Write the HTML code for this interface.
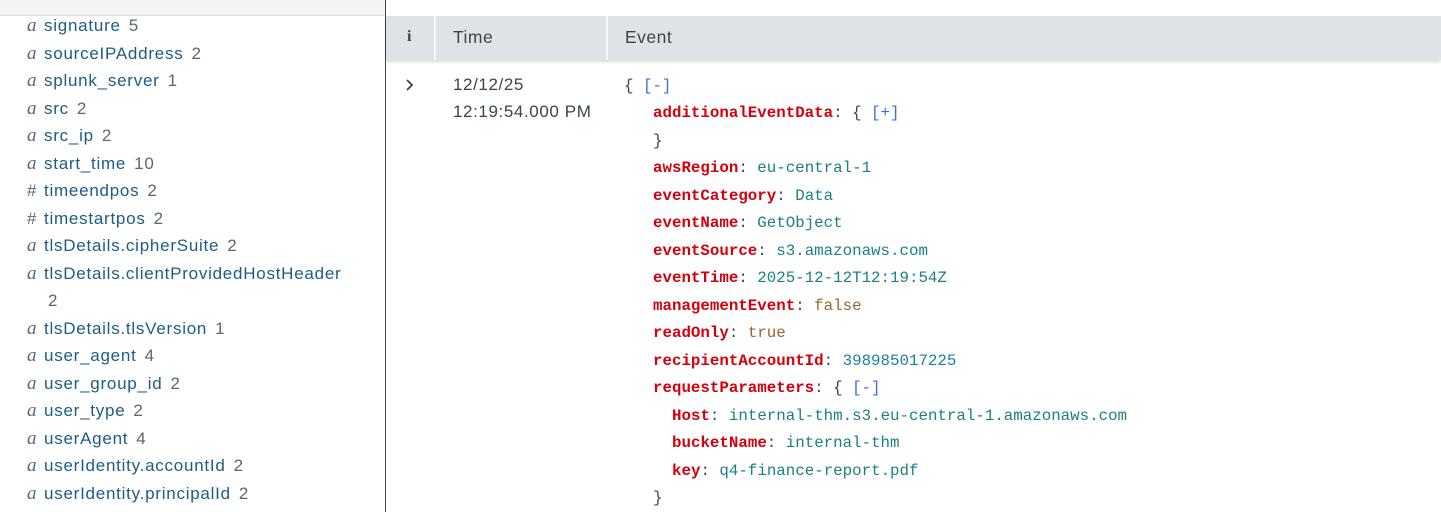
<!DOCTYPE html>
<html><head><style>
*{margin:0;padding:0;box-sizing:border-box}
body{width:1441px;height:512px;overflow:hidden;background:#fff;position:relative;font-family:"Liberation Sans",sans-serif}
.topl{position:absolute;left:0;top:0;width:385px;height:16px;background:#f2f4f5;border-bottom:1px solid #dce0e3}
.div{position:absolute;left:385px;top:0;width:1px;height:512px;background:#3c444d}
.hdr{position:absolute;left:386px;top:16px;width:1055px;height:44px;background:#dfe3e7;box-shadow:0 2px 3px rgba(0,0,0,.15)}
.hs{position:absolute;top:0;width:2px;height:44px;background:#f4f6f7}
.ht{position:absolute;top:11px;font-size:17.5px;color:#3c444d;letter-spacing:0.5px}
.f{position:absolute;left:27px;font-size:17px;letter-spacing:0.75px;color:#1d5c86;white-space:nowrap;line-height:20px;margin-top:1px}
.f i{font-family:"Liberation Serif",serif;color:#5c6773;font-size:19px;display:inline-block;width:17px;letter-spacing:0}
.f b{font-weight:normal;display:inline-block;width:17px;color:#5c6773;font-size:17px;letter-spacing:0}
.f s{text-decoration:none;color:#5c6773;margin-left:8px}
.e{position:absolute;font-family:"Liberation Mono",monospace;font-size:15.8px;color:#3c444d;white-space:pre;line-height:20px}
.k{color:#d6000d;font-weight:bold}
.s{color:#1b7f84}
.n{color:#1a7fa0}
.bo{color:#9d6432}
.l{color:#3a6fe0}
.t{position:absolute;left:453px;font-size:17px;letter-spacing:0.6px;color:#3c444d;line-height:20px}
</style></head><body>
<div class="topl"></div>
<div class="div"></div>
<div class="hdr">
<div class="hs" style="left:48px"></div><div class="hs" style="left:220px"></div>
<div class="ht" style="left:21px;font-family:'Liberation Serif',serif;font-weight:bold;font-size:16px;top:12px">i</div>
<div class="ht" style="left:67px">Time</div>
<div class="ht" style="left:239px">Event</div>
</div>

<div class="f" style="top:15px"><i>a</i>signature<s>5</s></div>
<div class="f" style="top:43px"><i>a</i>sourceIPAddress<s>2</s></div>
<div class="f" style="top:70px"><i>a</i>splunk_server<s>1</s></div>
<div class="f" style="top:98px"><i>a</i>src<s>2</s></div>
<div class="f" style="top:125px"><i>a</i>src_ip<s>2</s></div>
<div class="f" style="top:153px"><i>a</i>start_time<s>10</s></div>
<div class="f" style="top:180px"><b>#</b>timeendpos<s>2</s></div>
<div class="f" style="top:208px"><b>#</b>timestartpos<s>2</s></div>
<div class="f" style="top:235px"><i>a</i>tlsDetails.cipherSuite<s>2</s></div>
<div class="f" style="top:263px"><i>a</i>tlsDetails.clientProvidedHostHeader</div>
<div class="f" style="top:290px;left:48px"><s style="margin:0">2</s></div>
<div class="f" style="top:318px"><i>a</i>tlsDetails.tlsVersion<s>1</s></div>
<div class="f" style="top:345px"><i>a</i>user_agent<s>4</s></div>
<div class="f" style="top:373px"><i>a</i>user_group_id<s>2</s></div>
<div class="f" style="top:400px"><i>a</i>user_type<s>2</s></div>
<div class="f" style="top:428px"><i>a</i>userAgent<s>4</s></div>
<div class="f" style="top:455px"><i>a</i>userIdentity.accountId<s>2</s></div>
<div class="f" style="top:483px"><i>a</i>userIdentity.principalId<s>2</s></div>

<svg style="position:absolute;left:404px;top:78px" width="12" height="14"><path d="M3 2l5 5-5 5" fill="none" stroke="#3c444d" stroke-width="1.8"/></svg>
<div class="t" style="top:75px">12/12/25</div>
<div class="t" style="top:102px">12:19:54.000 PM</div>

<div class="e" style="left:624px;top:76px">{ <span class="l">[-]</span></div>
<div class="e" style="left:653px;top:103px"><span class="k">additionalEventData</span>: { <span class="l">[+]</span></div>
<div class="e" style="left:653px;top:131px">}</div>
<div class="e" style="left:653px;top:158px"><span class="k">awsRegion</span>: <span class="s">eu-central-1</span></div>
<div class="e" style="left:653px;top:186px"><span class="k">eventCategory</span>: <span class="s">Data</span></div>
<div class="e" style="left:653px;top:213px"><span class="k">eventName</span>: <span class="s">GetObject</span></div>
<div class="e" style="left:653px;top:241px"><span class="k">eventSource</span>: <span class="s">s3.amazonaws.com</span></div>
<div class="e" style="left:653px;top:268px"><span class="k">eventTime</span>: <span class="s">2025-12-12T12:19:54Z</span></div>
<div class="e" style="left:653px;top:296px"><span class="k">managementEvent</span>: <span class="bo">false</span></div>
<div class="e" style="left:653px;top:323px"><span class="k">readOnly</span>: <span class="bo">true</span></div>
<div class="e" style="left:653px;top:351px"><span class="k">recipientAccountId</span>: <span class="n">398985017225</span></div>
<div class="e" style="left:653px;top:378px"><span class="k">requestParameters</span>: { <span class="l">[-]</span></div>
<div class="e" style="left:672px;top:406px"><span class="k">Host</span>: <span class="s">internal-thm.s3.eu-central-1.amazonaws.com</span></div>
<div class="e" style="left:672px;top:433px"><span class="k">bucketName</span>: <span class="s">internal-thm</span></div>
<div class="e" style="left:672px;top:461px"><span class="k">key</span>: <span class="s">q4-finance-report.pdf</span></div>
<div class="e" style="left:653px;top:488px">}</div>
</body></html>
